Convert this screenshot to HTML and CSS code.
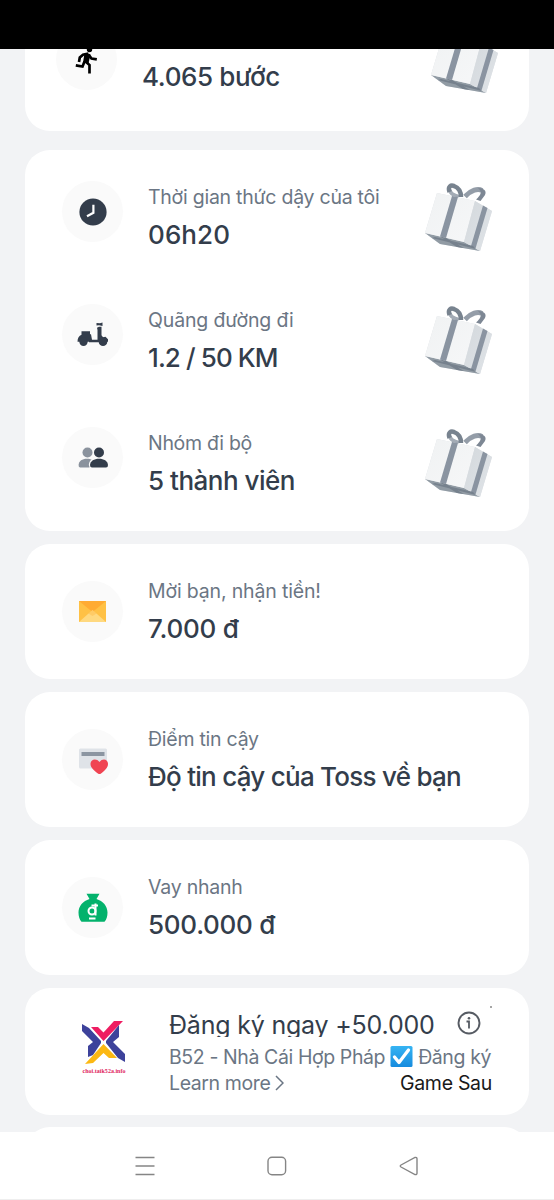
FILE: index.html
```html
<!DOCTYPE html>
<html lang="vi">
<head>
<meta charset="utf-8">
<title>Toss</title>
<link rel="stylesheet" href="styles.css">
</head>
<body>
<svg class="defs" width="0" height="0" aria-hidden="true">
  <defs>
    <linearGradient id="front" x1="0" y1="0" x2="1" y2="1"><stop offset="0" stop-color="#f0f2f3"/><stop offset="1" stop-color="#f6f7f8"/></linearGradient>
    <linearGradient id="side" x1="0" y1="0" x2="1" y2="1"><stop offset="0" stop-color="#d3d8dc"/><stop offset="1" stop-color="#e0e4e8"/></linearGradient>
    <linearGradient id="blue" x1="0" y1="0" x2="0" y2="1"><stop offset="0" stop-color="#36b4f3"/><stop offset="1" stop-color="#168bde"/></linearGradient>
    <symbol id="gift" viewBox="0 0 70 70">
      <path d="M34 16C28 14 24 11 25 8" fill="none" stroke="#a3abb5" stroke-width="4"/>
      <path d="M24.500 11C22.500 5 26 4 29 5C33 6.500 36 10 36 16" fill="none" stroke="#78838f" stroke-width="4.500"/>
      <path d="M40 15.500C46 9 53 7 57 9.500" fill="none" stroke="#949da8" stroke-width="5"/>
      <path d="M53 7C59 7 62 10 60 14L55.500 20L51 18.500C56 14 57.500 11 53 7Z" fill="#7d8794"/>
      <path d="M12 12L50 20L67 30L55 70L15 63L0 52Z" fill="#dce0e4"/>
      <path d="M0 52L39 61L55 70L15 63Z" fill="#919ba4"/>
      <path d="M12 12L50 20L39 61L0 52Z" fill="url(#front)"/>
      <path d="M50 20L67 30L55 70L39 61Z" fill="url(#side)"/>
      <path d="M27 15L33 16L21 57L15 55.5Z" fill="#8a94a1"/>
      <path d="M58 24.500L62.500 27L50.500 67.500L46 65Z" fill="#8a94a1"/>
      <path d="M15 55.500L21 57L39 67L32 66ZM7 57L10 56L48 65L51 68Z" fill="#76818d"/>
    </symbol>
  </defs>
</svg>
<div class="screen">
  <div class="statusbar"></div>
  <main class="feed">
    <section class="card card-top">
      <div class="badge"><svg class="runner" width="24" height="28" viewBox="0 0 24 28"><circle cx="15.500" cy="3.500" r="2.700"/><path d="M14.500 7.500L9 8.700L5.800 11.500L5 16M14.500 8.500L17.500 12.500L22.800 13.400M11 15L15.500 19V27.500M10.500 15.500L8.500 20.500L1.800 19.300" fill="none" stroke="#000" stroke-width="2.700"/><path d="M10.500 7.500L16.500 8.500L14.500 17.500L9 16.500Z"/></svg></div>
      <div class="copy"><div class="value steps">4.065 bước</div></div>
      <svg class="gift"><use href="#gift"/></svg>
    </section>

    <section class="card card-list">
      <div class="row">
        <div class="badge"><svg width="28" height="28" viewBox="0 0 28 28"><circle cx="14" cy="14" r="13.600" fill="#333d4b"/><path d="M14.400 6.800V14.800L8 18.300" fill="none" stroke="#fff" stroke-width="2.200"/></svg></div>
        <div class="copy"><div class="label l1">Thời gian thức dậy của tôi</div><div class="value v1">06h20</div></div>
        <svg class="gift"><use href="#gift"/></svg>
      </div>
      <div class="row">
        <div class="badge"><svg width="32" height="28" viewBox="0 0 32 28"><g fill="#333d4b" transform="translate(0 1.700)"><path d="M4.500 8.500H13V11.500H14L15 17H20.500V7.200L20 5L22 4H24.500V12.500L26 14.500L28.500 14L31 16.500V19H26V19.500H12V19H.5C.5 15.500 2 13 4.500 12Z"/><circle cx="6.500" cy="19" r="4.200"/><circle cx="26" cy="19" r="4.300"/><path d="M19.500 .2L23 .5L25.500 -.3V3.300L22 2.500L19.500 2.700Z"/></g></svg></div>
        <div class="copy"><div class="label l2">Quãng đường đi</div><div class="value v2">1.2 / 50 KM</div></div>
        <svg class="gift"><use href="#gift"/></svg>
      </div>
      <div class="row">
        <div class="badge"><svg width="30" height="22" viewBox="0 0 30 22"><g fill="#8a929d"><circle cx="9.500" cy="5.500" r="5"/><path d="M.6 18C1 14 4 11.800 9 11.800C11 11.800 13 12.300 14 13L11.500 20.500H2Q.5 20 .6 18Z"/></g><circle cx="21" cy="5.500" r="6" fill="#fafafa"/><path d="M10.800 18C11 13 15 10.500 21 10.500L22 21H12Z" fill="#fafafa"/><g fill="#333d4b"><circle cx="21" cy="5.500" r="5"/><path d="M12 18C12.500 14 16 11.800 21 11.800S29.500 14 30 18Q30 20.500 28 20.500H14Q12 20.500 12 18Z"/></g></svg></div>
        <div class="copy"><div class="label l3">Nhóm đi bộ</div><div class="value v3">5 thành viên</div></div>
        <svg class="gift"><use href="#gift"/></svg>
      </div>
    </section>

    <section class="card card-single">
      <div class="badge"><svg width="27" height="21" viewBox="0 0 27 21"><path d="M0 0H27V21H0Z" fill="#ffc145"/><path d="M0 0H27L13.500 11Z" fill="#ffab33"/><path d="M0 21L13.500 9L27 21Z" fill="#ffd980"/><path d="M9.500 12.600L13.500 9L17.500 12.600L13.500 15Z" fill="#ffbd4c" opacity=".5"/></svg></div>
      <div class="copy"><div class="label l4">Mời bạn, nhận tiền!</div><div class="value v4">7.000 đ</div></div>
    </section>

    <section class="card card-single">
      <div class="badge"><svg width="30" height="28" viewBox="0 0 30 28"><g transform="translate(0 1.500)"><rect x="1" y="1" width="28" height="20" rx="1.500" fill="#dfe3e8"/><rect x="3.500" y="4.500" width="23" height="4" fill="#8b95a1"/><path d="M21.500 27C17 24 12.500 20.500 12.500 16.500C12.500 11.500 18.500 10.500 21.500 14.500C24.500 10.500 30 11.500 30 16.500C30 20.500 26 24 21.500 27Z" fill="#f04452"/></g></svg></div>
      <div class="copy"><div class="label l5">Điểm tin cậy</div><div class="value v5">Độ tin cậy của Toss về bạn</div></div>
    </section>

    <section class="card card-single">
      <div class="badge"><svg width="30" height="30" viewBox="0 0 30 30"><path d="M8.500 .8H21.500L18.500 6C25 8 29.500 13 29.500 19.500C29.500 23.500 28.500 26.500 26.500 28.800H3.500C1.500 26.500 .5 23.500 .5 19.500C.5 13 5 8 11.500 6Z" fill="#03b26c"/><g fill="none" stroke="#fff" stroke-width="2"><circle cx="14" cy="18" r="3.500"/><path d="M17.500 22.500V10.500M13.500 12.500H20M11 25.500H17.500"/></g></svg></div>
      <div class="copy"><div class="label l6">Vay nhanh</div><div class="value v6">500.000 đ</div></div>
    </section>

    <section class="card card-ad">
      <svg class="logo" width="46" height="58" viewBox="0 0 46 58">
        <path d="M10 7H17L22.500 12.500L33 1H42L22.500 21Z" fill="#ee1d62"/>
        <path d="M1 4L8 8L20 21V23L12 35L7 37V26L12 22L1 11Z" fill="#3d429b"/>
        <path d="M38 5V17L32 22L44 34V42L37 38L25 23V21Z" fill="#3d429b"/>
        <path d="M22.500 24L36 38H28L22.500 33L12 43L4 44Z" fill="#fcb813"/>
        <text x="1.500" y="52.500" textLength="43">choi.taik52a.info</text>
      </svg>
      <div class="ad-copy">
        <div class="ad-head"><div class="ad-title">Đăng ký ngay +50.000</div>
          <svg class="info" width="24" height="24" viewBox="0 0 24 24"><circle cx="12" cy="12" r="10.500" fill="none" stroke="#565b63" stroke-width="1.900"/><path d="M9.500 10.500H12V17.500" fill="none" stroke="#565b63" stroke-width="1.800"/><circle cx="12" cy="7.200" r="1.300" fill="#565b63"/></svg>
        </div>
        <div class="ad-body"><span class="b1">B52 - Nhà Cái Hợp Pháp</span><svg width="23" height="21" viewBox="0 0 22 21"><rect width="22" height="21" rx="1.500" fill="url(#blue)"/><path d="M4 11L8.500 16.500L18 4" fill="none" stroke="#fff" stroke-width="3.300" stroke-linecap="round" stroke-linejoin="round"/></svg><span class="b2">Đăng ký</span></div>
        <div class="ad-foot"><span class="more">Learn more</span><svg width="9" height="16" viewBox="0 0 9 16"><path d="M1 1L8 8L1 15" fill="none" stroke="#6b7684" stroke-width="1.500"/></svg><span class="sponsor">Game Sau</span></div>
      </div>
      <i class="dot"></i>
    </section>
    <section class="card card-next"></section>
  </main>
  <nav class="navbar">
    <svg width="20" height="20" viewBox="0 0 20 20"><path d="M.5 1.500H19.500M.5 10H19.500M.5 18.500H19.500"/></svg>
    <svg width="20" height="20" viewBox="0 0 20 20"><rect x="1" y="1.200" width="17.600" height="17.600" rx="4"/></svg>
    <svg width="20" height="20" viewBox="0 0 20 20"><path d="M2 9L16 1.500Q18 1 18 2.800V17.200Q18 19 16 18.500L2 11Q.5 10 2 9Z"/></svg>
  </nav>
</div>
</body>
</html>
```
FILE: styles.css
```css
* { box-sizing: border-box; }
body { margin: 0; font-family: Inter, "Noto Sans", sans-serif; background: #f2f3f5; }
.defs { position: absolute; }
.screen { height: 1200px; display: flex; flex-direction: column; overflow: hidden; }
.statusbar { height: 49px; background: #000; flex: none; }
.feed { height: 1083px; flex: none; overflow: hidden; padding: 0 25px; display: flex; flex-direction: column; gap: 13px; }
.card { background: #fff; border-radius: 25px; flex: none; }
.card-top { height: 82px; border-radius: 0 0 25px 25px; padding: 0 31px; display: flex; align-items: flex-start; margin-bottom: 6px; overflow: hidden; }
.card-top .badge { margin-top: -20px; }
.card-top .copy { padding-top: 12px; }
.card-top .gift { margin-top: -26px; }
.runner { margin-right: 2px; }
.card-list { height: 381px; }
.row { height: 123px; padding: 0 37px; display: flex; align-items: center; }
.row .copy { padding-top: 13px; }
.card-single { height: 135px; padding: 0 37px; display: flex; align-items: center; }
.badge { width: 61px; height: 61px; border-radius: 50%; background: #fafafa; display: flex; align-items: center; justify-content: center; flex: none; margin-right: 25px; }
.copy { flex: 1; display: flex; flex-direction: column; gap: 10px; white-space: nowrap; }
.label { font-size: 19.500px; line-height: 24px; color: #6b7684; }
.value { font-size: 26px; line-height: 32px; font-weight: 500; color: #333d4b; }
.steps { letter-spacing: -.37px; }
.l1 { letter-spacing: -.25px; }
.l2 { letter-spacing: -.15px; }
.l3 { letter-spacing: -.3px; }
.l4 { letter-spacing: -.16px; }
.l5 { letter-spacing: -.25px; }
.l6 { letter-spacing: -.22px; }
.v1 { letter-spacing: .1px; }
.v2 { letter-spacing: -.9px; }
.v3 { letter-spacing: -.5px; }
.v4 { letter-spacing: -.2px; }
.v5 { letter-spacing: -.74px; }
.v6 { letter-spacing: -.27px; }
.gift { width: 70px; height: 70px; flex: none; margin: 9px -3px 0 0; }
.card-ad { height: 127px; padding: 21px 37px 0 56px; display: flex; position: relative; }
.logo { flex: none; margin: 11px 42px 0 0; overflow: visible; }
.logo text { font: bold 6px "Liberation Serif", serif; fill: #e0245e; }
.ad-copy { flex: 1; min-width: 0; white-space: nowrap; }
.ad-head { display: flex; justify-content: space-between; height: 28px; padding-right: 11px; }
.ad-title { font-size: 25px; line-height: 32px; height: 28px; overflow: hidden; color: #333d4b; letter-spacing: -.2px; }
.info { margin-top: 2px; }
.ad-body { margin-top: 8px; height: 23px; overflow: hidden; display: flex; gap: 5px; font-size: 19.500px; line-height: 25px; color: #6b7684; }
.ad-body svg { flex: none; margin-top: 1px; }
.b1, .b2, .more { letter-spacing: -.4px; }
.ad-foot { margin-top: 3px; display: flex; align-items: center; gap: 5px; font-size: 19.500px; line-height: 24px; color: #6b7684; }
.sponsor { margin-left: auto; color: #191919; letter-spacing: -.3px; }
.dot { position: absolute; right: 37px; top: 18px; width: 2px; height: 2px; background: #888; border-radius: 50%; }
.card-next { height: 80px; margin-top: -1px; }
.navbar { height: 68px; flex: none; background: #fff; border-bottom: 1px solid #eee; padding: 0 135px; display: flex; align-items: center; justify-content: space-between; }
.navbar svg { fill: none; stroke: #858585; stroke-width: 1.400; }
```
